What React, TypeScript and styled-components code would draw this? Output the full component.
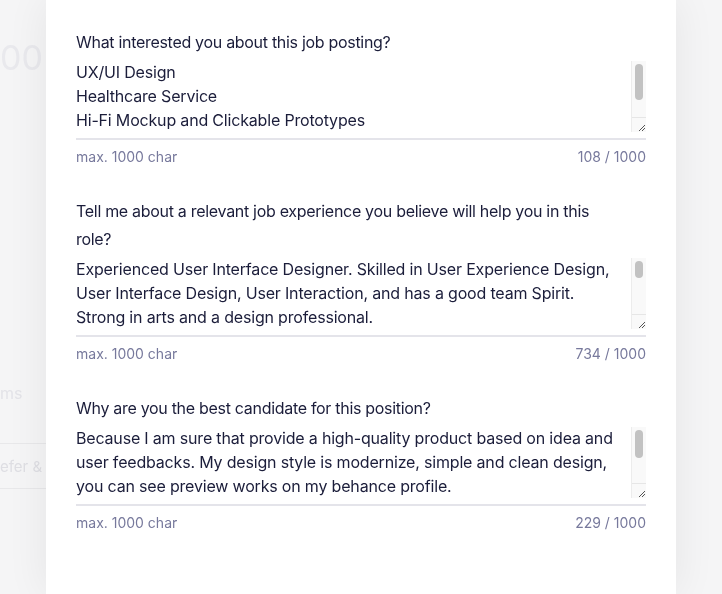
import React from "react";
import styled, { createGlobalStyle } from "styled-components";

const Global = createGlobalStyle`
  html, body { margin: 0; padding: 0; height: 100%; }
  body {
    background: #f5f5f6;
    font-family: Inter, "Noto Sans", sans-serif;
    overflow: hidden;
  }
`;

const Backdrop = styled.div`
  position: fixed;
  inset: 0;
  overflow: hidden;
`;

const GhostPrice = styled.div`
  position: absolute;
  left: 0;
  top: 38px;
  font-size: 34px;
  line-height: 40px;
  color: #e9e9ed;
  white-space: nowrap;
`;

const GhostText = styled.div`
  position: absolute;
  left: 0;
  top: 382px;
  font-size: 16px;
  line-height: 22px;
  color: #e3e3e8;
  white-space: nowrap;
`;

const GhostButton = styled.div`
  position: absolute;
  left: 0;
  top: 443px;
  width: 60px;
  height: 44px;
  display: flex;
  align-items: center;
  border-top: 1px solid #e8e8ea;
  border-bottom: 1px solid #e8e8ea;
  font-size: 15px;
  color: #dedee3;
  white-space: nowrap;
`;

const Modal = styled.div`
  position: fixed;
  top: 0;
  bottom: 0;
  left: 46px;
  width: 630px;
  box-sizing: border-box;
  background: #ffffff;
  box-shadow: 0 0 40px rgba(0, 0, 0, 0.07);
  padding: 28px 30px 0;
  display: flex;
  flex-direction: column;
  gap: 30px;
`;

const Field = styled.div`
  display: flex;
  flex-direction: column;
`;

const Label = styled.label`
  max-width: 545px;
  font-size: 16px;
  line-height: 28px;
  letter-spacing: -0.3px;
  color: #1b1d3a;
`;

const InputBox = styled.div`
  margin-top: 4px;
  padding-bottom: 6px;
  display: flex;
  align-items: flex-start;
  border-bottom: 2px solid #e4e4ea;
`;

const TextArea = styled.textarea`
  flex: 1;
  height: 72px;
  box-sizing: border-box;
  margin: 0;
  padding: 0;
  border: none;
  outline: none;
  resize: none;
  overflow: hidden;
  background: transparent;
  font-family: inherit;
  font-size: 16px;
  line-height: 24px;
  letter-spacing: -0.18px;
  color: #1b1d3a;
`;

const ScrollColumn = styled.div`
  margin-top: 1px;
  width: 15px;
  height: 71px;
  box-sizing: border-box;
  border-left: 1px solid #ececec;
  background: #f9f9f9;
  display: flex;
  flex-direction: column;
`;

const Track = styled.div`
  flex: 1;
  padding: 3px 0 0 3px;
`;

const Thumb = styled.div<{ $h: number }>`
  width: 8px;
  height: ${(p) => p.$h}px;
  border-radius: 4px;
  background: #c2c2c2;
`;

const Grip = styled.div`
  height: 14px;
  border-top: 1px solid #e6e6e6;
  display: flex;
  align-items: flex-end;
  justify-content: flex-end;
`;

const Helper = styled.div`
  margin-top: 7px;
  display: flex;
  justify-content: space-between;
  font-size: 14px;
  line-height: 20px;
  color: #77799c;
`;

const GripIcon = () => (
  <svg width="10" height="10" viewBox="0 0 10 10">
    <path d="M9 3 L3 9 M9 6 L6 9" stroke="#555" strokeWidth="1" />
  </svg>
);

const fields = [
  {
    label: "What interested you about this job posting?",
    value:
      "UX/UI Design\nHealthcare Service\nHi-Fi Mockup and Clickable Prototypes\nUser Research\nInteraction Design and Wireframes",
    count: "108 / 1000",
    thumb: 36,
  },
  {
    label:
      "Tell me about a relevant job experience you believe will help you in this role?",
    value:
      "Experienced User Interface Designer. Skilled in User Experience Design,\nUser Interface Design, User Interaction, and has a good team Spirit.\nStrong in arts and a design professional.\nMore than five years of work on mobile and web products for startups and agencies, from research to final delivery.",
    count: "734 / 1000",
    thumb: 17,
  },
  {
    label: "Why are you the best candidate for this position?",
    value:
      "Because I am sure that provide a high-quality product based on idea and\nuser feedbacks. My design style is modernize, simple and clean design,\nyou can see preview works on my behance profile.\nThank you for your time.",
    count: "229 / 1000",
    thumb: 28,
  },
];

export default function App() {
  return (
    <>
      <Global />
      <Backdrop>
        <GhostPrice>00</GhostPrice>
        <GhostText>ms</GhostText>
        <GhostButton>efer &amp; E</GhostButton>
      </Backdrop>
      <Modal>
        {fields.map((f, i) => (
          <Field key={i}>
            <Label>{f.label}</Label>
            <InputBox>
              <TextArea defaultValue={f.value} />
              <ScrollColumn>
                <Track>
                  <Thumb $h={f.thumb} />
                </Track>
                <Grip>
                  <GripIcon />
                </Grip>
              </ScrollColumn>
            </InputBox>
            <Helper>
              <span>max. 1000 char</span>
              <span>{f.count}</span>
            </Helper>
          </Field>
        ))}
      </Modal>
    </>
  );
}
